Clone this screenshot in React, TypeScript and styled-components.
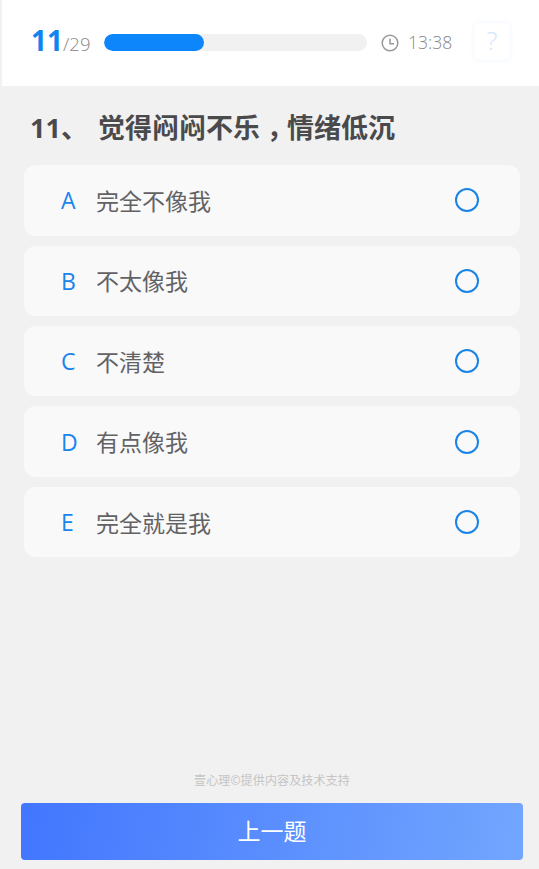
import styled, { createGlobalStyle } from "styled-components";

const GlobalStyle = createGlobalStyle`
  html, body {
    margin: 0;
    padding: 0;
    height: 100%;
    background: #f1f1f1;
  }
  body {
    font-family: "Open Sans", "Noto Sans CJK SC", sans-serif;
  }
`;

const Page = styled.div`
  height: 869px;
  display: flex;
  flex-direction: column;
  overflow: hidden;
`;

const Header = styled.header`
  height: 86px;
  margin-left: 2px;
  padding: 0 28px 2px 29px;
  box-sizing: border-box;
  background: #fff;
  display: flex;
  align-items: center;
`;

const Counter = styled.div`
  width: 73px;
  flex: none;
  margin-top: -2px;
  display: flex;
  align-items: baseline;
  white-space: nowrap;
`;

const Current = styled.span`
  font-size: 28px;
  font-weight: 700;
  color: #1284f0;
  line-height: 1;
`;

const Total = styled.span`
  font-size: 18.5px;
  font-weight: 300;
  color: #888;
`;

const Track = styled.div`
  width: 263px;
  height: 17px;
  flex: none;
  border-radius: 9px;
  background: #f1f1f1;
  overflow: hidden;
`;

const Fill = styled.div`
  height: 100%;
  border-radius: 9px;
  background: #0d86fb;
`;

const Timer = styled.div`
  margin-left: 14px;
  width: 92px;
  flex: none;
  display: flex;
  align-items: center;
  gap: 9px;
  font-size: 17.5px;
  font-weight: 300;
  color: #888;

  svg {
    margin-top: 1px;
  }
`;

const HelpButton = styled.div`
  width: 38px;
  height: 39px;
  margin-top: -1px;
  flex: none;
  box-sizing: border-box;
  padding-bottom: 4px;
  border-radius: 6px;
  border: 1px solid #f6faff;
  box-shadow: 0 0 3px rgba(200, 225, 250, 0.25);
  display: flex;
  align-items: center;
  justify-content: center;
  font-size: 26px;
  font-weight: 300;
  color: #d4e8fb;
`;

const Main = styled.main`
  flex: 1;
  display: flex;
  flex-direction: column;
  padding: 0 16px 9px 21px;
`;

const Title = styled.h1`
  margin: 24px 0 19.3px 9px;
  font-size: 27px;
  line-height: 36px;
  font-weight: 700;
  word-spacing: 3px;
  color: #4a4a4d;
  white-space: pre;
`;

const Comma = styled.span`
  display: inline-block;
  width: 1em;
  line-height: 1;
  text-align: center;
  font-feature-settings: "halt";
`;

const OptionList = styled.div`
  margin: 0 3px;
  display: flex;
  flex-direction: column;
  gap: 10px;
`;

const Option = styled.div`
  height: 70.4px;
  box-sizing: border-box;
  padding: 0 41px 0 37px;
  border-radius: 12px;
  background: #f9f9f9;
  display: flex;
  align-items: center;
`;

const Letter = styled.span`
  width: 35px;
  flex: none;
  font-size: 23px;
  color: #1a84ee;
`;

const Label = styled.span`
  flex: 1;
  margin-top: -1px;
  font-size: 23px;
  color: #626265;
`;

const Radio = styled.span`
  width: 24px;
  height: 24px;
  flex: none;
  box-sizing: border-box;
  border: 2px solid #1a84e6;
  border-radius: 50%;
`;

const Credit = styled.div`
  margin-top: auto;
  margin-bottom: 14px;
  text-align: center;
  font-size: 12px;
  line-height: 17px;
  letter-spacing: 0.15px;
  color: #c4c4c4;
`;

const BackButton = styled.button`
  width: 502px;
  height: 57px;
  flex: none;
  padding: 0 0 3px;
  border: 0;
  border-radius: 4px;
  background: linear-gradient(100deg, #4276fe, #72a6fe);
  color: #fff;
  font-family: inherit;
  font-size: 23px;
`;

const options = [
  { key: "A", text: "完全不像我" },
  { key: "B", text: "不太像我" },
  { key: "C", text: "不清楚" },
  { key: "D", text: "有点像我" },
  { key: "E", text: "完全就是我" },
];

export default function App() {
  return (
    <Page>
      <GlobalStyle />
      <Header>
        <Counter>
          <Current>11</Current>
          <Total>/29</Total>
        </Counter>
        <Track>
          <Fill style={{ width: `${(11 / 29) * 100}%` }} />
        </Track>
        <Timer>
          <svg width="18" height="18" viewBox="0 0 18 18" fill="none" stroke="#999" strokeWidth="1.5">
            <circle cx="9" cy="9" r="7.8" />
            <path d="M9 4.5V9.8H13" />
          </svg>
          13:38
        </Timer>
        <HelpButton>?</HelpButton>
      </Header>
      <Main>
        <Title>
          {"11、 觉得闷闷不乐"}
          <Comma>，</Comma>
          情绪低沉
        </Title>
        <OptionList>
          {options.map((option) => (
            <Option key={option.key}>
              <Letter>{option.key}</Letter>
              <Label>{option.text}</Label>
              <Radio />
            </Option>
          ))}
        </OptionList>
        <Credit>壹心理©提供内容及技术支持</Credit>
        <BackButton type="button">上一题</BackButton>
      </Main>
    </Page>
  );
}
